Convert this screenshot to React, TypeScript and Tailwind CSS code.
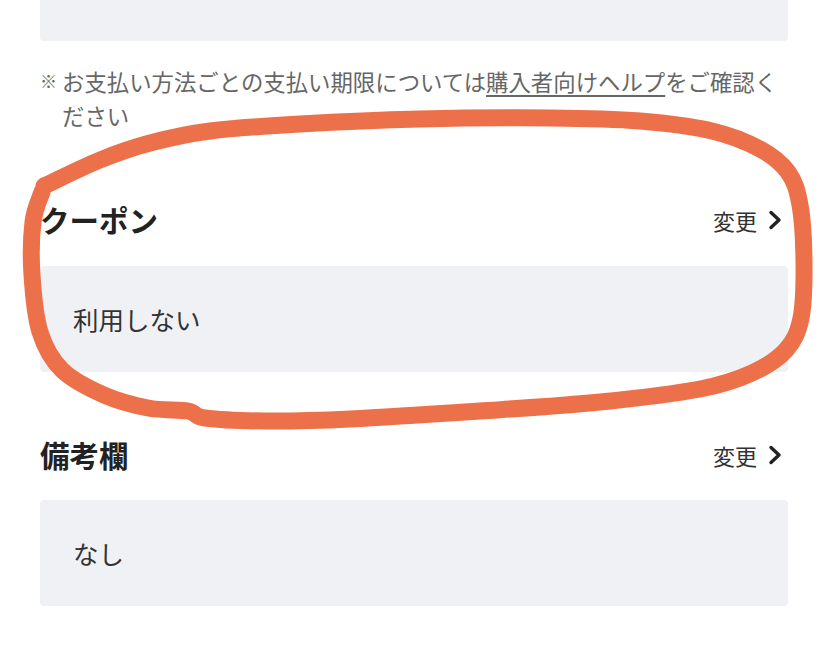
import React from "react";

const pts: [number, number][] = [
  [44, 186], [100, 160], [150, 143], [210, 131], [300, 124], [420, 119], [550, 118], [640, 121],
  [712, 131], [760, 149], [788, 172], [800, 205], [804, 262], [801, 318], [786, 350], [752, 373],
  [700, 389], [600, 402], [480, 411], [350, 419], [265, 421], [205, 418], [188, 411], [148, 408],
  [104, 395], [62, 370], [40, 332], [32, 275], [33, 222], [42, 192],
];

function smoothPath(p: [number, number][]): string {
  let d = `M${p[0][0]},${p[0][1]}`;
  for (let i = 0; i < p.length - 1; i++) {
    const p0 = p[i - 1] || p[i];
    const p1 = p[i];
    const p2 = p[i + 1];
    const p3 = p[i + 2] || p2;
    const c1x = p1[0] + (p2[0] - p0[0]) / 6;
    const c1y = p1[1] + (p2[1] - p0[1]) / 6;
    const c2x = p2[0] - (p3[0] - p1[0]) / 6;
    const c2y = p2[1] - (p3[1] - p1[1]) / 6;
    d += ` C${c1x.toFixed(1)},${c1y.toFixed(1)} ${c2x.toFixed(1)},${c2y.toFixed(1)} ${p2[0]},${p2[1]}`;
  }
  return d;
}

const loop = smoothPath(pts);

function Chevron() {
  return (
    <svg width="16" height="22" viewBox="0 0 16 22" fill="none">
      <polyline points="4,3.5 12,11 4,18.5" stroke="#222" strokeWidth="3.4" strokeLinecap="round" strokeLinejoin="round" />
    </svg>
  );
}

function SectionHeader({ title, mt }: { title: string; mt: string }) {
  return (
    <div className={`flex h-[40px] items-center justify-between ${mt}`}>
      <div className="text-[29.5px] font-bold leading-none text-[#222]">{title}</div>
      <div className="flex items-center gap-[10px] pr-[5px]">
        <span className="text-[22px] leading-none text-[#333]">変更</span>
        <Chevron />
      </div>
    </div>
  );
}

function ValueBox({ text, mt }: { text: string; mt: string }) {
  return (
    <div className={`flex h-[106px] items-center rounded-[4px] bg-[#f0f1f5] pl-[33px] ${mt}`}>
      <span className="text-[25.5px] leading-none text-[#333]">{text}</span>
    </div>
  );
}

export default function App() {
  return (
    <div
      className="relative h-[652px] w-[828px] overflow-hidden bg-white"
      style={{ fontFamily: '"Noto Sans CJK JP", "Noto Sans", sans-serif' }}
    >
      <div className="px-[40px]">
        <div className="h-[41px] rounded-b-[4px] bg-[#f0f1f5]" />
        <div className="mt-[23px] flex text-[22.4px] leading-[34px] text-[#666]">
          <span className="w-[22px] shrink-0 text-[17px]">※</span>
          <p className="pr-[2px]">
            お支払い方法ごとの支払い期限については<span className="underline decoration-[1.5px] underline-offset-[4px]">購入者向けヘルプ</span>をご確認ください
          </p>
        </div>
        <SectionHeader title="クーポン" mt="mt-[68px]" />
        <ValueBox text="利用しない" mt="mt-[26px]" />
        <SectionHeader title="備考欄" mt="mt-[63px]" />
        <ValueBox text="なし" mt="mt-[25px]" />
      </div>
      <svg className="pointer-events-none absolute left-0 top-0" width="828" height="652" viewBox="0 0 828 652">
        <path d={loop} fill="none" stroke="#ec704a" strokeWidth="17" strokeLinecap="round" strokeLinejoin="round" />
      </svg>
    </div>
  );
}
